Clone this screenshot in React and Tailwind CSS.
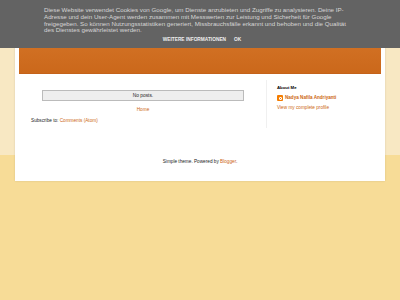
export default function App() {
  return (
    <div className="relative w-[400px] h-[300px] overflow-hidden bg-[linear-gradient(to_bottom,#f8e8c3_0px,#f8e8c3_155px,#f7dc97_155px,#f7dc97_100%)] font-['Liberation_Sans',Arial,sans-serif]">
      <div className="mx-[15px] mt-[20px] bg-white shadow-[0_0_2px_rgba(0,0,0,0.12)]">
        <div className="px-[4px] pt-[4px]">
          <div className="h-[50px] bg-[linear-gradient(to_bottom,#d6772a,#cb681b)] border-b border-[#c4621a]"></div>
        </div>
        <div className="flex pt-[6px]">
          <div className="w-[240px] pl-[16px] pt-[10px]">
            <div className="mx-[11px] h-[11px] bg-[#eeeeee] border border-[#bbbbbb] flex items-center justify-center text-[4.8px] text-[#222]">
              No posts.
            </div>
            <div className="mt-[6px] text-center text-[4.7px] leading-[6px] text-[#cc6611]">Home</div>
            <div className="mt-[5px] text-[4.7px] leading-[6px] text-[#222]">
              Subscribe to: <span className="text-[#cc6611]">Comments (Atom)</span>
            </div>
          </div>
          <div className="ml-[11px] border-l border-[#f0f0f0] pl-[10px] pt-[5px] h-[48px]">
            <div className="text-[4.3px] font-bold leading-[6px] text-[#000]">About Me</div>
            <div className="mt-[4px] flex items-center gap-[2px]">
              <div className="w-[6px] h-[6px] bg-[#f57d00] rounded-[1px] flex items-center justify-center">
                <div className="w-[3px] h-[3px] border border-white rounded-[1px]"></div>
              </div>
              <span className="text-[4.6px] font-bold text-[#cc6611] leading-[6px]">Nadya Nafila Andriyanti</span>
            </div>
            <div className="mt-[4px] text-[4.7px] leading-[6px] text-[#cc6611]">View my complete profile</div>
          </div>
        </div>
        <div className="pt-[31px] pb-[16px] text-center text-[4.7px] leading-[6px] text-[#222]">
          Simple theme. Powered by <span className="text-[#cc6611]">Blogger</span>.
        </div>
      </div>
      <div className="absolute top-0 left-0 w-[400px] h-[48px] bg-[#636363] text-[#d6d6d6]">
        <div className="pl-[44px] pt-[7px] text-[6.2px] leading-[6.8px] whitespace-nowrap">
          <div>Diese Website verwendet Cookies von Google, um Dienste anzubieten und Zugriffe zu analysieren. Deine IP-</div>
          <div>Adresse und dein User-Agent werden zusammen mit Messwerten zur Leistung und Sicherheit für Google</div>
          <div>freigegeben. So können Nutzungsstatistiken generiert, Missbrauchsfälle erkannt und behoben und die Qualität</div>
          <div>des Dienstes gewährleistet werden.</div>
        </div>
        <div className="mt-[3px] flex justify-center gap-[8px] text-[4.8px] font-bold text-[#eeeeee] leading-[6px] pl-[4px]">
          <span>WEITERE INFORMATIONEN</span>
          <span>OK</span>
        </div>
      </div>
    </div>
  );
}
